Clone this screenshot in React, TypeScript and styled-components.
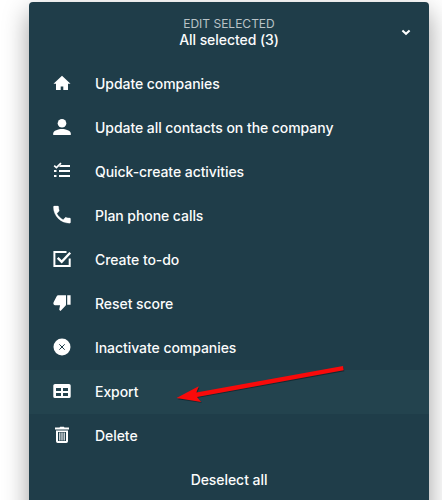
import React from "react";
import styled, { createGlobalStyle } from "styled-components";

const GlobalStyle = createGlobalStyle`
  * { box-sizing: border-box; }
  html, body { margin: 0; height: 500px; overflow: hidden; background: #fff; }
  body { font-family: Inter, "Liberation Sans", sans-serif; }
`;

const Page = styled.main`
  position: relative;
  height: 500px;
  overflow: hidden;
  padding: 2px 13px 0 29px;
`;

const Panel = styled.section`
  width: 400px;
  height: 530px;
  border-radius: 4px;
  background: #1f3d49;
  color: #fbfcfc;
  box-shadow: 0 10px 26px rgba(0, 0, 0, 0.38);
`;

const Header = styled.header`
  display: grid;
  grid-template-columns: 46px 1fr 46px;
  align-items: center;
  height: 60px;
  text-align: center;
`;

const Titles = styled.div`
  grid-column: 2;
`;

const Eyebrow = styled.div`
  font-size: 12px;
  line-height: 16px;
  color: #b9c3c7;
`;

const Title = styled.div`
  font-size: 14px;
  line-height: 16px;
  font-weight: 500;
  letter-spacing: -0.06px;
`;

const Chevron = styled.svg`
  width: 12px;
  height: 12px;
  justify-self: center;
`;

const Menu = styled.ul`
  margin: 0;
  padding: 0;
  list-style: none;
`;

const Row = styled.li<{ $active?: boolean }>`
  display: flex;
  align-items: center;
  gap: 21px;
  height: 44px;
  padding-left: 21px;
  background: ${(p) => (p.$active ? "#23434e" : "transparent")};
`;

const Glyph = styled.svg`
  flex: none;
  width: 24px;
  height: 24px;
  fill: #fff;
`;

const Label = styled.span`
  font-size: 14px;
  line-height: 20px;
  font-weight: 500;
  letter-spacing: -0.06px;
  white-space: nowrap;
`;

const Footer = styled.footer`
  display: flex;
  align-items: center;
  justify-content: center;
  height: 44px;
`;

const Arrow = styled.svg`
  position: absolute;
  left: 170px;
  top: 360px;
  width: 180px;
  height: 50px;
`;

const items: { label: string; icon: React.ReactNode; active?: boolean }[] = [
  {
    label: "Update companies",
    icon: <path d="M12 3.800 3.500 11.700H6V18h4.700v-3.600h2.600V18H18v-6.300h2.500z" />,
  },
  {
    label: "Update all contacts on the company",
    icon: (
      <>
        <circle cx="12" cy="7.200" r="4.300" />
        <path d="M3.200 19v-1.500c0-3 5.200-4.500 8.800-4.500s8.800 1.500 8.800 4.500V19z" />
      </>
    ),
  },
  {
    label: "Quick-create activities",
    icon: (
      <>
        <path d="M10.500 5H20v2H9zM9 10h11v2H9zM9 15h11v2H9zM4 10h2.500v2H4zM4 15h2.500v2H4z" />
        <path d="m4.200 5.700 2.200 2 4.600-4.600" fill="none" stroke="#fff" strokeWidth="1.700" />
      </>
    ),
  },
  {
    label: "Plan phone calls",
    icon: (
      <path
        transform="translate(.6 -.8) scale(.95)"
        d="M6.620 10.790c1.440 2.830 3.760 5.140 6.590 6.590l2.200-2.200c.270-.270.670-.360 1.020-.240 1.120.370 2.330.570 3.570.570.550 0 1 .450 1 1V20c0 .550-.450 1-1 1C10.610 21 3 13.390 3 4c0-.550.450-1 1-1h3.500c.550 0 1 .450 1 1 0 1.250.200 2.450.570 3.570.110.350.030.740-.250 1.020z"
        stroke="#fff"
        strokeWidth=".3"
      />
    ),
  },
  {
    label: "Create to-do",
    icon: (
      <g fill="none" stroke="#fff">
        <path d="M16.500 4H4.400v14.100h15.300V10.500" strokeWidth="2" />
        <path d="m7.700 9.800 4 4 8.500-9" strokeWidth="2.400" />
      </g>
    ),
  },
  {
    label: "Reset score",
    icon: <path d="M16 3.300H8.200c-.7 0-1.200.4-1.500 1l-3.100 6c-.7 1.700.2 2.900 1.500 2.900h5l-.8 4c-.1.500.1.800.4 1.100l.8.700 5-5.200c.3-.3.500-.7.500-1.200zM17.200 3.300h3.400v9.400h-3.400z" />,
  },
  {
    label: "Inactivate companies",
    icon: (
      <>
        <circle cx="12" cy="11" r="8.500" />
        <path d="m9.300 8.300 5.400 5.400m0-5.400-5.400 5.400" stroke="#1f3d49" strokeWidth="1" />
      </>
    ),
  },
  {
    label: "Export",
    active: true,
    icon: (
      <path
        fillRule="evenodd"
        d="M5 4h14q1.700 0 1.700 1.500v11q0 1.500-1.700 1.500H5q-1.700 0-1.700-1.500v-11Q3.300 4 5 4zM6 8v3h5V8zm7 0v3h5V8zM6 13v3h5v-3zm7 0v3h5v-3z"
      />
    ),
  },
  {
    label: "Delete",
    icon: (
      <>
        <path d="M5 3.500h4.500l.7-.7h3.600l.7.700H19v2H5z" />
        <path
          fillRule="evenodd"
          d="M6 6.500h12v10.800q0 1.700-1.700 1.700H7.700Q6 19 6 17.300zM8 8v9h8V8z"
        />
        <path d="M9 8.600h1.500v7.800H9zM11.250 8.600h1.500v7.800h-1.500zM13.500 8.600H15v7.800h-1.500z" opacity=".75" />
      </>
    ),
  },
];

export default function App() {
  return (
    <>
      <GlobalStyle />
      <Page>
        <Panel>
          <Header>
            <Titles>
              <Eyebrow>EDIT SELECTED</Eyebrow>
              <Title>All selected (3)</Title>
            </Titles>
            <Chevron viewBox="0 0 12 12">
              <path d="m2.400 4.400 3.600 3.400 3.600-3.400" fill="none" stroke="#fff" strokeWidth="2" />
            </Chevron>
          </Header>
          <Menu>
            {items.map((item) => (
              <Row key={item.label} $active={item.active}>
                <Glyph viewBox="0 0 24 24">{item.icon}</Glyph>
                <Label>{item.label}</Label>
              </Row>
            ))}
          </Menu>
          <Footer>
            <Label>Deselect all</Label>
          </Footer>
        </Panel>
        <Arrow viewBox="0 0 180 50">
          <path
            d="m7 38.200 21.800-11.500-2.600 6.200L173 6.300l.7 3.900L27 36.700l4.300 5.100z"
            transform="translate(.6 1)"
            fill="#142a33"
          />
          <path d="m6.500 38 22.200-11.700-2.300 6.200L173 6l.7 4.200L27 36.900l4.200 5.200z" fill="#f90a0a" />
        </Arrow>
      </Page>
    </>
  );
}
